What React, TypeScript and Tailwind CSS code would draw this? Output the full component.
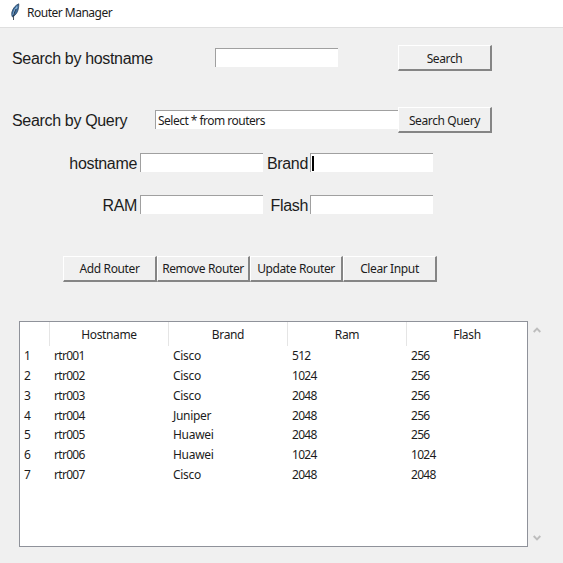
import React from "react";

const ROUTERS = [
  ["1", "rtr001", "Cisco", "512", "256"],
  ["2", "rtr002", "Cisco", "1024", "256"],
  ["3", "rtr003", "Cisco", "2048", "256"],
  ["4", "rtr004", "Juniper", "2048", "256"],
  ["5", "rtr005", "Huawei", "2048", "256"],
  ["6", "rtr006", "Huawei", "1024", "1024"],
  ["7", "rtr007", "Cisco", "2048", "2048"],
];

const COLUMNS = ["", "Hostname", "Brand", "Ram", "Flash"];
const GRID = "grid grid-cols-[30px_119px_119px_119px_120px]";

function Feather() {
  return (
    <svg width="10" height="18" viewBox="0 0 10 18" className="shrink-0">
      <path d="M8.800.8C6 1.800 3 5 1.900 9c-.5 2-.2 3.600.6 5C5.200 12.500 7.600 9.700 8.200 6.500 8.600 4.500 9 2.500 8.800.8Z" fill="#3d6c9c" stroke="#26405c" strokeWidth=".7" />
      <path d="M7.300 3.500C5 6 3.600 9 3.100 12" fill="none" stroke="#8fb9dc" strokeWidth="1.200" />
      <path d="M6 6C4.200 9.500 3.300 12 3.500 17" fill="none" stroke="#1c2733" strokeWidth=".8" />
    </svg>
  );
}

function Label({ children, className = "" }: { children: React.ReactNode; className?: string }) {
  return <span className={`shrink-0 whitespace-nowrap pt-[2px] text-[16px] leading-[20px] tracking-[-0.33px] text-[#1c1c1c] ${className}`}>{children}</span>;
}

function Entry({ children, className = "w-[123px]" }: { children?: React.ReactNode; className?: string }) {
  return (
    <div className={`flex h-[19px] shrink-0 items-center border-l border-t border-[#a0a0a0] bg-white font-['Noto_Sans',sans-serif] text-[12px] ${className}`}>
      {children}
    </div>
  );
}

function Button({ children, className = "w-[94px] pt-px" }: { children: React.ReactNode; className?: string }) {
  return (
    <button className={`flex h-[26px] shrink-0 items-center justify-center whitespace-nowrap border-b-2 border-l border-r-2 border-t border-b-[#858585] border-l-white border-r-[#858585] border-t-white bg-[#f0f0f0] font-['Noto_Sans',sans-serif] text-[12px] tracking-[-0.38px] text-[#1c1c1c] ${className}`}>
      {children}
    </button>
  );
}

export default function App() {
  return (
    <div className="flex h-[563px] w-[563px] flex-col overflow-hidden bg-[#f0f0f0] font-['Liberation_Sans',Arial,sans-serif]">
      <header className="flex h-[28px] shrink-0 items-center gap-[7px] border-b border-[#dfdfdf] bg-white pb-[3px] pl-[10px] font-['Noto_Sans',sans-serif] text-[12px] text-[#1c1c1c]">
        <Feather />
        <span className="pt-[2px] tracking-[-0.5px]">Router Manager</span>
      </header>

      <div className="mt-[17px] flex h-[26px] shrink-0 items-center pl-[12px]">
        <Label className="w-[203px]">Search by hostname</Label>
        <Entry className="mb-px w-[123px]" />
        <Button className="ml-[60px] w-[94px] pt-[2px]">Search</Button>
      </div>

      <div className="mt-[36px] flex h-[26px] shrink-0 items-center pl-[12px]">
        <Label className="w-[143px]">Search by Query</Label>
        <Entry className="mb-px w-[243px] pl-[2px] pt-px tracking-[-0.52px] text-[#1c1c1c]">Select * from routers</Entry>
        <Button className="w-[94px] pt-[2px]">Search Query</Button>
      </div>

      <div className="mt-[20px] flex h-[19px] shrink-0 items-center">
        <Label className="w-[137px] text-right">hostname</Label>
        <Entry className="ml-[3px] w-[123px]" />
        <Label className="w-[45px] text-right">Brand</Label>
        <Entry className="ml-[2px] w-[123px] pl-px">
          <span className="h-[15px] w-[2px] bg-black" />
        </Entry>
      </div>

      <div className="mt-[23px] flex h-[19px] shrink-0 items-center">
        <Label className="w-[137px] text-right">RAM</Label>
        <Entry className="ml-[3px] w-[123px]" />
        <Label className="w-[45px] text-right">Flash</Label>
        <Entry className="ml-[2px] w-[123px]" />
      </div>

      <div className="mt-[42px] flex shrink-0 pl-[63px]">
        <Button>Add Router</Button>
        <Button className="w-[93px] pt-px">Remove Router</Button>
        <Button className="w-[93px] pt-px">Update Router</Button>
        <Button>Clear Input</Button>
      </div>

      <div className="mt-[39px] flex h-[226px] shrink-0 pl-[19px]">
        <div className="w-[509px] border border-[#8f929a] bg-white font-['Noto_Sans',sans-serif] text-[12px] text-[#1c1c1c]">
          <div className={`${GRID} h-[24px] tracking-[-0.35px]`}>
            {COLUMNS.map((c, i) => (
              <div key={i} className="flex items-center justify-center border-r border-[#e5e5e5] pt-px last:border-r-0">{c}</div>
            ))}
          </div>
          {ROUTERS.map((row) => (
            <div key={row[0]} className={`${GRID} h-[19.85px]`}>
              {row.map((cell, i) => (
                <div key={i} className={`pl-[4px] leading-[20px] ${i === 2 ? "tracking-[-0.3px]" : "tracking-[-0.7px]"}`}>{cell}</div>
              ))}
            </div>
          ))}
        </div>
        <div className="flex w-[17px] flex-col items-center justify-between py-[6px]">
          <svg width="8" height="6" viewBox="0 0 8 6"><path d="M.7 5 4 1.700 7.300 5" fill="none" stroke="#bdbdbd" strokeWidth="1.900" /></svg>
          <svg width="8" height="6" viewBox="0 0 8 6"><path d="M.7 1 4 4.300 7.300 1" fill="none" stroke="#bdbdbd" strokeWidth="1.900" /></svg>
        </div>
      </div>
    </div>
  );
}
